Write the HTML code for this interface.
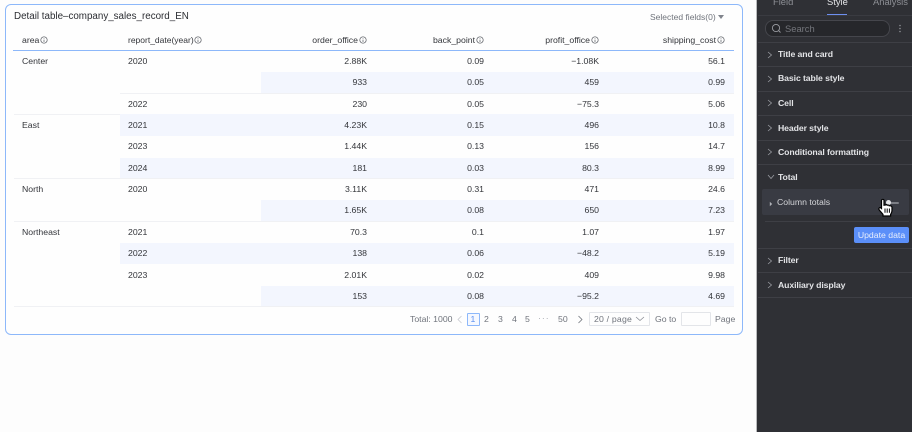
<!DOCTYPE html>
<html><head><meta charset="utf-8">
<style>
html,body{margin:0;padding:0;width:912px;height:432px;overflow:hidden;background:#fdfdfd;font-family:"Liberation Sans",sans-serif}
#a{position:relative;width:912px;height:432px;overflow:hidden}
#a div,#a span,#a svg{position:absolute}
.t{font-size:8.7px;line-height:12px;color:#33353a;white-space:nowrap}
.r{text-align:right;width:90px}
.b{background:#f3f6fe}
.l{background:#f0f1f4;height:1px}
.h{color:#e2e3e6;font-size:8.7px;line-height:12px;font-weight:bold;white-space:nowrap;left:778px;letter-spacing:-.1px}
.s{background:#3e3f45;height:1px;left:758px;width:154px}
.p{font-size:8.7px;line-height:12px;color:#70747c;white-space:nowrap}
</style></head><body><div id="a">

<div style="left:5px;top:4px;width:736px;height:329px;border:1px solid #8db8fa;border-radius:6px;background:#fefefe"></div>
<div class="t" style="left:14px;top:11px;font-size:9.8px;color:#2b2d32">Detail table–company_sales_record_EN</div>
<div class="p" style="left:650px;top:11px;font-size:8.5px">Selected fields(0)</div>
<svg style="left:718px;top:15px" width="7" height="5"><path d="M0 0H6L3 4Z" fill="#80848c"/></svg>

<div class="b" style="left:261px;top:72px;width:473px;height:21px"></div>
<div class="b" style="left:120px;top:114px;width:614px;height:22px"></div>
<div class="b" style="left:120px;top:158px;width:614px;height:20px"></div>
<div class="b" style="left:261px;top:200px;width:473px;height:21px"></div>
<div class="b" style="left:120px;top:243px;width:614px;height:21px"></div>
<div class="b" style="left:261px;top:286px;width:473px;height:20px"></div>

<div style="left:13px;top:50px;width:721px;height:1px;background:#8db8fa"></div>
<div class="l" style="left:120px;top:93px;width:614px"></div>
<div class="l" style="left:14px;top:114px;width:106px"></div>
<div class="l" style="left:14px;top:178px;width:720px"></div>
<div class="l" style="left:14px;top:221px;width:720px"></div>
<div class="l" style="left:14px;top:306px;width:720px"></div>

<!-- header -->
<div class="t" style="left:22px;top:34px">area</div>
<svg style="left:40px;top:36px" width="8" height="8"><circle cx="4" cy="4" r="3.2" fill="none" stroke="#55585f" stroke-width=".7"/><path d="M4 2.2V2.9M4 3.6V6" stroke="#55585f" stroke-width=".7"/></svg>
<div class="t" style="left:128px;top:34px;font-size:8.5px">report_date(year)</div>
<svg style="left:194px;top:36px" width="8" height="8"><circle cx="4" cy="4" r="3.2" fill="none" stroke="#55585f" stroke-width=".7"/><path d="M4 2.2V2.9M4 3.6V6" stroke="#55585f" stroke-width=".7"/></svg>
<div class="t r" style="left:268px;top:34px">order_office</div>
<svg style="left:359px;top:36px" width="8" height="8"><circle cx="4" cy="4" r="3.2" fill="none" stroke="#55585f" stroke-width=".7"/><path d="M4 2.2V2.9M4 3.6V6" stroke="#55585f" stroke-width=".7"/></svg>
<div class="t r" style="left:385px;top:34px">back_point</div>
<svg style="left:476px;top:36px" width="8" height="8"><circle cx="4" cy="4" r="3.2" fill="none" stroke="#55585f" stroke-width=".7"/><path d="M4 2.2V2.9M4 3.6V6" stroke="#55585f" stroke-width=".7"/></svg>
<div class="t r" style="left:500px;top:34px">profit_office</div>
<svg style="left:591px;top:36px" width="8" height="8"><circle cx="4" cy="4" r="3.2" fill="none" stroke="#55585f" stroke-width=".7"/><path d="M4 2.2V2.9M4 3.6V6" stroke="#55585f" stroke-width=".7"/></svg>
<div class="t r" style="left:626px;top:34px">shipping_cost</div>
<svg style="left:717px;top:36px" width="8" height="8"><circle cx="4" cy="4" r="3.2" fill="none" stroke="#55585f" stroke-width=".7"/><path d="M4 2.2V2.9M4 3.6V6" stroke="#55585f" stroke-width=".7"/></svg>

<!-- col 1 -->
<div class="t" style="left:22px;top:55px">Center</div>
<div class="t" style="left:22px;top:119px">East</div>
<div class="t" style="left:22px;top:183px">North</div>
<div class="t" style="left:22px;top:226px">Northeast</div>
<!-- col 2 -->
<div class="t" style="left:128px;top:55px">2020</div>
<div class="t" style="left:128px;top:98px">2022</div>
<div class="t" style="left:128px;top:119px">2021</div>
<div class="t" style="left:128px;top:140px">2023</div>
<div class="t" style="left:128px;top:162px">2024</div>
<div class="t" style="left:128px;top:183px">2020</div>
<div class="t" style="left:128px;top:226px">2021</div>
<div class="t" style="left:128px;top:247px">2022</div>
<div class="t" style="left:128px;top:269px">2023</div>

<!-- rows -->
<div class="t r" style="left:277px;top:55px">2.88K</div><div class="t r" style="left:394px;top:55px">0.09</div><div class="t r" style="left:509px;top:55px">−1.08K</div><div class="t r" style="left:635px;top:55px">56.1</div>
<div class="t r" style="left:277px;top:76px">933</div><div class="t r" style="left:394px;top:76px">0.05</div><div class="t r" style="left:509px;top:76px">459</div><div class="t r" style="left:635px;top:76px">0.99</div>
<div class="t r" style="left:277px;top:98px">230</div><div class="t r" style="left:394px;top:98px">0.05</div><div class="t r" style="left:509px;top:98px">−75.3</div><div class="t r" style="left:635px;top:98px">5.06</div>
<div class="t r" style="left:277px;top:119px">4.23K</div><div class="t r" style="left:394px;top:119px">0.15</div><div class="t r" style="left:509px;top:119px">496</div><div class="t r" style="left:635px;top:119px">10.8</div>
<div class="t r" style="left:277px;top:140px">1.44K</div><div class="t r" style="left:394px;top:140px">0.13</div><div class="t r" style="left:509px;top:140px">156</div><div class="t r" style="left:635px;top:140px">14.7</div>
<div class="t r" style="left:277px;top:162px">181</div><div class="t r" style="left:394px;top:162px">0.03</div><div class="t r" style="left:509px;top:162px">80.3</div><div class="t r" style="left:635px;top:162px">8.99</div>
<div class="t r" style="left:277px;top:183px">3.11K</div><div class="t r" style="left:394px;top:183px">0.31</div><div class="t r" style="left:509px;top:183px">471</div><div class="t r" style="left:635px;top:183px">24.6</div>
<div class="t r" style="left:277px;top:204px">1.65K</div><div class="t r" style="left:394px;top:204px">0.08</div><div class="t r" style="left:509px;top:204px">650</div><div class="t r" style="left:635px;top:204px">7.23</div>
<div class="t r" style="left:277px;top:226px">70.3</div><div class="t r" style="left:394px;top:226px">0.1</div><div class="t r" style="left:509px;top:226px">1.07</div><div class="t r" style="left:635px;top:226px">1.97</div>
<div class="t r" style="left:277px;top:247px">138</div><div class="t r" style="left:394px;top:247px">0.06</div><div class="t r" style="left:509px;top:247px">−48.2</div><div class="t r" style="left:635px;top:247px">5.19</div>
<div class="t r" style="left:277px;top:269px">2.01K</div><div class="t r" style="left:394px;top:269px">0.02</div><div class="t r" style="left:509px;top:269px">409</div><div class="t r" style="left:635px;top:269px">9.98</div>
<div class="t r" style="left:277px;top:290px">153</div><div class="t r" style="left:394px;top:290px">0.08</div><div class="t r" style="left:509px;top:290px">−95.2</div><div class="t r" style="left:635px;top:290px">4.69</div>

<!-- pagination -->
<div class="p" style="left:410px;top:313px">Total: 1000</div>
<svg style="left:456px;top:315px" width="8" height="9"><path d="M5.5 1L2 4.5L5.5 8" fill="none" stroke="#c8cad0" stroke-width=".8"/></svg>
<div style="left:467px;top:313px;width:11px;height:11px;border:1px solid #8db8fa;border-radius:1px;background:#f5f8ff"></div>
<div class="p" style="left:470.5px;top:313px;color:#5b8ff0">1</div>
<div class="p" style="left:484px;top:313px">2</div>
<div class="p" style="left:498px;top:313px">3</div>
<div class="p" style="left:512px;top:313px">4</div>
<div class="p" style="left:525px;top:313px">5</div>
<div class="p" style="left:538px;top:312px;letter-spacing:1px;color:#a0a3aa">···</div>
<div class="p" style="left:558px;top:313px">50</div>
<svg style="left:576px;top:315px" width="8" height="9"><path d="M2.5 1L6 4.5L2.5 8" fill="none" stroke="#70747c" stroke-width=".8"/></svg>
<div style="left:589px;top:312px;width:59px;height:12px;border:1px solid #e3e5e9;border-radius:1px"></div>
<div class="p" style="left:594px;top:313px;letter-spacing:.2px">20 / page</div>
<svg style="left:635px;top:316px" width="10" height="6"><path d="M1 1L5 4.5L9 1" fill="none" stroke="#8a8d94" stroke-width=".8"/></svg>
<div class="p" style="left:655px;top:313px">Go to</div>
<div style="left:681px;top:312px;width:28px;height:12px;border:1px solid #e3e5e9;border-radius:1px"></div>
<div class="p" style="left:715px;top:313px">Page</div>

<!-- panel -->
<div style="left:756px;top:0;width:2px;height:432px;background:#b9babc"></div>
<div style="left:757px;top:0;width:155px;height:432px;background:#2f3035"></div>
<div style="left:773px;top:-4px;font-size:9.4px;line-height:12px;color:#8d8f95;white-space:nowrap">Field</div>
<div style="left:827px;top:-4px;font-size:9.4px;line-height:12px;color:#e4e5e8;white-space:nowrap">Style</div>
<div style="left:873px;top:-4px;font-size:9.4px;line-height:12px;color:#8d8f95;white-space:nowrap">Analysis</div>
<div style="left:827px;top:14px;width:20px;height:1px;background:#6d8ff0"></div>
<div class="s" style="top:15px;background:#3a3b41"></div>
<div style="left:765px;top:20px;width:123px;height:15px;border:1px solid #45464c;border-radius:8px;background:#26272b"></div>
<svg style="left:771px;top:23px" width="11" height="11"><circle cx="5" cy="5" r="3.6" fill="none" stroke="#9a9ca2" stroke-width=".9"/><path d="M7.6 7.6L9.5 9.5" stroke="#9a9ca2" stroke-width=".9"/></svg>
<div style="left:785px;top:23px;font-size:9.4px;line-height:12px;color:#74767c">Search</div>
<svg style="left:898px;top:24px" width="4" height="10"><circle cx="2" cy="1.5" r=".8" fill="#8d8f95"/><circle cx="2" cy="4.5" r=".8" fill="#8d8f95"/><circle cx="2" cy="7.5" r=".8" fill="#8d8f95"/></svg>
<div class="s" style="top:42px"></div>

<svg style="left:767px;top:51px" width="6" height="8"><path d="M1 1L4.5 4L1 7" fill="none" stroke="#9a9ca2" stroke-width=".8"/></svg>
<div class="h" style="top:48px">Title and card</div>
<div class="s" style="top:66px"></div>
<svg style="left:767px;top:75px" width="6" height="8"><path d="M1 1L4.5 4L1 7" fill="none" stroke="#9a9ca2" stroke-width=".8"/></svg>
<div class="h" style="top:72px">Basic table style</div>
<div class="s" style="top:91px"></div>
<svg style="left:767px;top:99px" width="6" height="8"><path d="M1 1L4.5 4L1 7" fill="none" stroke="#9a9ca2" stroke-width=".8"/></svg>
<div class="h" style="top:97px">Cell</div>
<div class="s" style="top:115px"></div>
<svg style="left:767px;top:124px" width="6" height="8"><path d="M1 1L4.5 4L1 7" fill="none" stroke="#9a9ca2" stroke-width=".8"/></svg>
<div class="h" style="top:122px">Header style</div>
<div class="s" style="top:140px"></div>
<svg style="left:767px;top:148px" width="6" height="8"><path d="M1 1L4.5 4L1 7" fill="none" stroke="#9a9ca2" stroke-width=".8"/></svg>
<div class="h" style="top:146px">Conditional formatting</div>
<div class="s" style="top:164px"></div>
<svg style="left:767px;top:174px" width="8" height="6"><path d="M1 1L4 4.5L7 1" fill="none" stroke="#9a9ca2" stroke-width=".8"/></svg>
<div class="h" style="top:171px">Total</div>
<div style="left:762px;top:189px;width:147px;height:26px;background:#393b43;border-radius:2px"></div>
<svg style="left:769px;top:201px" width="4" height="6"><path d="M.8 .8L3.2 3L.8 5.2Z" fill="#b0b2b8"/></svg>
<div style="left:777px;top:196px;font-size:8.7px;line-height:12px;color:#d4d5d9;white-space:nowrap">Column totals</div>
<div style="left:765px;top:221px;width:144px;height:1px;background:#3e3f45"></div>
<div style="left:854px;top:227px;width:55px;height:16px;background:#5b8ff9;border-radius:2px"></div>
<div style="left:854px;top:229px;width:55px;text-align:center;font-size:8.7px;line-height:12px;color:#e8eefc;white-space:nowrap">Update data</div>
<div class="s" style="top:248px"></div>
<svg style="left:767px;top:257px" width="6" height="8"><path d="M1 1L4.5 4L1 7" fill="none" stroke="#9a9ca2" stroke-width=".8"/></svg>
<div class="h" style="top:254px">Filter</div>
<div class="s" style="top:272px"></div>
<svg style="left:767px;top:281px" width="6" height="8"><path d="M1 1L4.5 4L1 7" fill="none" stroke="#9a9ca2" stroke-width=".8"/></svg>
<div class="h" style="top:279px">Auxiliary display</div>
<div class="s" style="top:297px"></div>

<!-- toggle & cursor -->
<div style="left:886px;top:202px;width:13px;height:2px;background:#7d7f86;border-radius:1px"></div>
<div style="left:886px;top:200px;width:5px;height:5px;border-radius:50%;background:#e4e5e8"></div>
<svg style="left:878px;top:198px" width="16" height="19" viewBox="0 0 16 19"><path d="M3.5 2.2C3.9 1 5.7 1 6 2.2V7.2L7.3 7C8 6.4 8.9 6.6 9.2 7.2C10 6.8 10.9 7.1 11.2 7.8C12.2 7.5 14 8 14 9.4V12.5C14 14.5 13 15.5 12.6 16.5V18H5V16.5C4 15 1.8 13 1 11.6C.4 10.2 1.8 9.2 2.8 9.9L3.5 10.5Z" fill="#fff" stroke="#000" stroke-width="1.2"/><path d="M7 10.5V14.8M9.2 10.5V14.8M11.4 10.5V14.8" stroke="#000" stroke-width="1"/></svg>

</div></body></html>
